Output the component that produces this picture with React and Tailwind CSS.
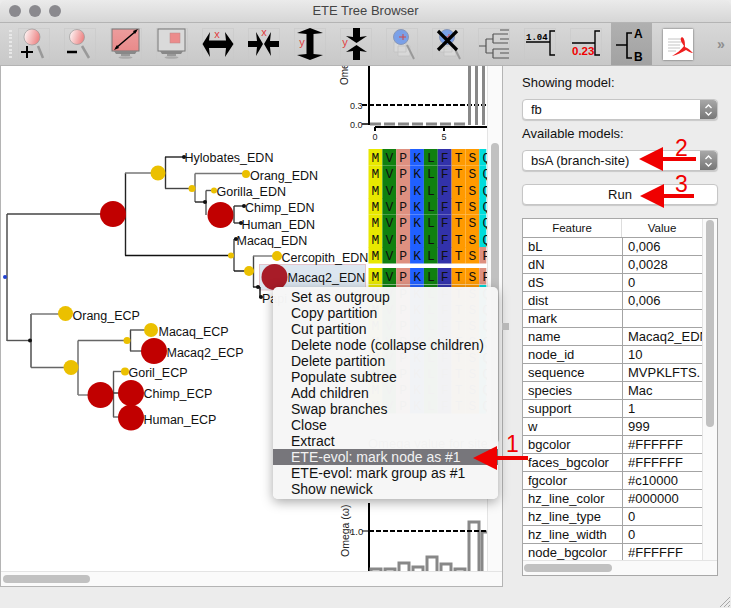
const SANS = "'Liberation Sans', Arial, sans-serif";

const lines = [
  [7, 214, 113, 214, "#444"], [7, 214, 7, 341, "#444"], [125.5, 173, 125.5, 255.5, "#222"], [125, 173, 158, 173, "#777"],
  [125, 255.5, 231, 255.5, "#111"], [165.5, 157, 165.5, 188.5, "#333"], [165, 157, 184, 157, "#222"], [165, 188.5, 192, 188.5, "#444"],
  [195, 173.5, 195, 202, "#666"], [195, 173.5, 246, 173.5, "#777"], [195, 202, 205, 202, "#222"], [206, 190.5, 206, 215, "#555"],
  [206, 190.5, 214, 190.5, "#555"], [234, 206, 234, 223, "#333"], [234, 206, 244, 206, "#333"], [234, 223, 241, 223, "#333"],
  [234, 239, 234, 271, "#444"], [234, 239, 237, 239, "#111"], [234, 271, 249, 271, "#111"], [253.5, 256, 253.5, 287, "#444"],
  [253, 256, 277, 256, "#777"], [253, 287, 260, 287, "#111"], [260, 287, 260, 298, "#111"],
  [7, 340.5, 31, 340.5, "#555"], [31, 314, 31, 367.5, "#444"], [31, 314, 65, 314, "#777"], [31, 367.5, 71, 367.5, "#666"],
  [78, 340.5, 78, 395, "#666"], [78, 340.5, 127, 340.5, "#666"], [78, 395, 100, 395, "#777"], [130.5, 330, 130.5, 351, "#444"],
  [130, 330, 151, 330, "#555"], [130, 351, 154, 351, "#555"], [113.5, 371.5, 113.5, 417, "#555"], [113, 371.5, 125, 371.5, "#666"],
  [113, 393, 131, 393, "#333"], [113, 417, 131, 417, "#666"],
];

const nodes = [
  [113, 214, 13, "#c10000"], [158, 173, 7.5, "#ebc000"], [192, 188.5, 3.5, "#ebc000"], [246, 174, 4, "#ebc000"], [214, 190.5, 3, "#ebc000"],
  [220.5, 215, 13, "#c10000"], [231, 255.5, 3, "#ebc000"], [249, 271, 5, "#ebc000"], [277, 256, 5, "#ebc000"], [274.5, 277, 13, "#a81c28"],
  [65.5, 313.5, 7.5, "#ebc000"], [71, 367.5, 7.5, "#ebc000"], [127, 340.5, 3.5, "#ebc000"], [151, 330, 7, "#ebc000"], [154, 351, 13, "#c10000"],
  [100.5, 395, 13, "#c10000"], [125, 371.5, 4, "#ebc000"], [131, 393, 13, "#c10000"], [131, 417.5, 13, "#c10000"],
  [184, 157, 2, "#111"], [205, 202, 2, "#111"], [244, 206, 2, "#111"], [241, 223, 2, "#111"], [236, 239, 2, "#111"], [258, 287, 2, "#111"],
  [261, 297, 2, "#111"], [30, 340.5, 2, "#111"], [5, 277, 2, "#2040d0"],
];

const labels = [
  ["Hylobates_EDN", 184.5, 162], ["Orang_EDN", 250, 180], ["Gorilla_EDN", 216.5, 196], ["Chimp_EDN", 245, 212], ["Human_EDN", 241.5, 229],
  ["Macaq_EDN", 236.5, 245], ["Cercopith_EDN", 281.5, 262], ["Macaq2_EDN", 287.5, 282], ["Papi", 262, 303],
  ["Orang_ECP", 72.5, 320], ["Macaq_ECP", 158.5, 336], ["Macaq2_ECP", 166.5, 357], ["Goril_ECP", 128.5, 377], ["Chimp_ECP", 143.5, 398], ["Human_ECP", 143.5, 424],
];

const aaColors = { M: "#e8e800", V: "#108010", P: "#de9080", K: "#2060ff", L: "#108010", F: "#3232aa", T: "#ff9a00", S: "#ff9a00", Q: "#00dcdc" };
const seqTops = [149, 165.5, 182, 198, 214.5, 231, 247, 268, 285, 301, 317, 333, 349, 365, 381, 397];

function Alignment() {
  return (
    <g>
      {seqTops.map((top, r) => {
        const seq = r === 6 || r === 7 ? "MVPKLFTSP" : "MVPKLFTSQ";
        return seq.split("").map((aa, c) => (
          <g key={r + "-" + c}>
            <rect x={368.5 + c * 13.85} y={top} width={c === 8 ? 7 : 13.85} height={16.5} fill={aaColors[aa]} />
            <text x={375.5 + c * 13.85} y={top + 12.5} textAnchor="middle" fontSize="13" fontFamily="'Liberation Mono', monospace" fill="#111">{aa}</text>
          </g>
        ));
      })}
    </g>
  );
}

function TopChart() {
  return (
    <g>
      <path d="M369 66V125" stroke="#000" strokeWidth="2" />
      <path d="M375 127H487M375 127V131M444 127V131" stroke="#000" strokeWidth="2" fill="none" />
      <path d="M362 105H487" stroke="#000" strokeWidth="1.8" strokeDasharray="5 2" />
      <path d="M362 124H369" stroke="#000" strokeWidth="1.5" />
      <path d="M370 124H465" stroke="#888" strokeWidth="3" strokeDasharray="11 3" />
      <path d="M469.5 66V125M476.5 66V125M483.5 66V125" stroke="#888" strokeWidth="3" />
      <g fontSize="9" fontFamily={SANS} fill="#222">
        <text x="350" y="109">0.3</text>
        <text x="350" y="128">0.0</text>
        <text x="372.5" y="140">0</text>
        <text x="441.5" y="140">5</text>
        <text transform="translate(348 85) rotate(-90)" fontSize="10">Ome</text>
      </g>
    </g>
  );
}

function BottomChart() {
  const bars = [[370, 569], [384, 569], [398, 563], [412, 567], [426, 557], [440, 564], [454, 569], [468, 522], [481, 532]];
  return (
    <g>
      <path d="M369 503V572" stroke="#000" strokeWidth="2" />
      <path d="M362 531H369" stroke="#000" strokeWidth="1" />
      {bars.map(([x, y]) => (
        <path key={x} d={`M${x + 1} 573V${y}H${x + 11}V573`} stroke="#888" strokeWidth="3" fill="none" />
      ))}
      <path d="M369 531H487" stroke="#000" strokeWidth="1.8" strokeDasharray="5 2" />
      <g fontSize="9.5" fontFamily={SANS} fill="#222">
        <text x="350" y="534.5">1.0</text>
        <text transform="translate(349 557) rotate(-90)" fontSize="10.5">Omega (ω)</text>
      </g>
    </g>
  );
}

function TreeCanvas() {
  return (
    <svg width="487" height="507" viewBox="0 66 487 507" className="-ml-px block">
      <TopChart />
      <Alignment />
      <text x="368" y="448" fontSize="13" fontFamily={SANS} fill="#333">Omega value for sites u</text>
      <BottomChart />
      <rect x="259.5" y="264.5" width="106" height="25.5" fill="#dce6f0" stroke="#e4c4cc" />
      {lines.map(([x1, y1, x2, y2, c], i) => (
        <line key={i} x1={x1} y1={y1} x2={x2} y2={y2} stroke={c} strokeWidth="1.4" />
      ))}
      {nodes.map(([cx, cy, r, fill], i) => (
        <circle key={i} cx={cx} cy={cy} r={r} fill={fill} />
      ))}
      {labels.map(([t, x, y]) => (
        <text key={t} x={x} y={y} fontSize="12.5" fontFamily={SANS} fill="#111">{t}</text>
      ))}
    </svg>
  );
}

const menuItems = [
  "Set as outgroup", "Copy partition", "Cut partition", "Delete node (collapse children)", "Delete partition", "Populate subtree",
  "Add children", "Swap branches", "Close", "Extract", "ETE-evol: mark node as #1", "ETE-evol: mark group as #1", "Show newick",
];

function ContextMenu() {
  return (
    <div className="absolute left-[272px] top-[221px] w-[225px] rounded-[5px] bg-[#f6f6f6]/[0.98] py-[2px] shadow-[0_3px_12px_rgba(0,0,0,0.35)]">
      {menuItems.map((item, i) => (
        <div
          key={item}
          className={"h-[16px] pl-[18px] text-[14px] leading-[16px] whitespace-nowrap " + (i === 10 ? "bg-[#77767b] text-[#f2f2f2]" : "text-[#111]")}
        >
          {item}
        </div>
      ))}
    </div>
  );
}

const rows = [
  ["bL", "0,006"], ["dN", "0,0028"], ["dS", "0"], ["dist", "0,006"], ["mark", ""], ["name", "Macaq2_EDN"], ["node_id", "10"],
  ["sequence", "MVPKLFTS."], ["species", "Mac"], ["support", "1"], ["w", "999"], ["bgcolor", "#FFFFFF"], ["faces_bgcolor", "#FFFFFF"],
  ["fgcolor", "#c10000"], ["hz_line_color", "#000000"], ["hz_line_type", "0"], ["hz_line_width", "0"], ["node_bgcolor", "#FFFFFF"],
];

function Stepper() {
  return (
    <div className="absolute right-0 top-0 bottom-0 flex w-[17px] items-center justify-center rounded-r-[4px] bg-gradient-to-b from-[#a8a8a8] to-[#777]">
      <svg width="9" height="14" viewBox="0 0 9 14" fill="none" stroke="#fff" strokeWidth="1.3">
        <path d="M1.5 5L4.5 2L7.5 5M1.5 9L4.5 12L7.5 9" />
      </svg>
    </div>
  );
}

function SelectBox({ value }) {
  return (
    <div className="relative h-[21px] w-[196px] rounded-[4px] border border-[#c6c6c6] bg-white pl-[8px] text-[13px] leading-[19px] text-[#111] shadow-[0_1px_1px_rgba(0,0,0,0.15)]">
      {value}
      <Stepper />
    </div>
  );
}

function SidePanel() {
  return (
    <div className="flex flex-col pl-[19px] text-[13px] text-[#111]">
      <div className="mt-[9px] h-[16px] leading-[16px]">Showing model:</div>
      <div className="mt-[8px]"><SelectBox value="fb" /></div>
      <div className="mt-[6px] h-[16px] leading-[16px]">Available models:</div>
      <div className="mt-[8px]"><SelectBox value="bsA (branch-site)" /></div>
      <div className="mt-[13px] flex h-[21px] w-[196px] items-center justify-center rounded-[4px] border border-[#c6c6c6] bg-white leading-[19px] shadow-[0_1px_1px_rgba(0,0,0,0.15)]">Run</div>
      <div className="relative mt-[13px] h-[358px] w-[196px] overflow-hidden border border-[#a8a8a8] bg-white">
        <div className="flex h-[18px] w-[179px] bg-white text-[11.5px] leading-[18px]">
          <div className="w-[99px] border-r border-[#ddd] text-center">Feature</div>
          <div className="w-[80px] text-center">Value</div>
        </div>
        {rows.map(([k, v]) => (
          <div key={k} className="flex h-[18px] w-[179px] border-t border-[#a4a4a4] text-[13px] leading-[17px]">
            <div className="w-[100px] border-r border-[#a4a4a4] pl-[5px] whitespace-nowrap">{k}</div>
            <div className="w-[79px] overflow-hidden pl-[5px] whitespace-nowrap">{v}</div>
          </div>
        ))}
        <div className="absolute left-[179px] top-0 bottom-0 w-[15px] border-l border-[#e4e4e4] bg-[#fafafa]">
          <div className="mx-auto mt-[1px] h-[207px] w-[8px] rounded-full bg-[#c1c1c1]" />
        </div>
        <div className="absolute bottom-0 left-0 right-0 h-[15px] border-t border-[#e4e4e4] bg-[#fafafa]">
          <div className="ml-[1px] mt-[3px] h-[8px] w-[88px] rounded-full bg-[#c1c1c1]" />
        </div>
      </div>
    </div>
  );
}

function Cell({ children }) {
  return (
    <div className="h-[32px] w-[32px] shrink-0 border border-[#c8c8c8]/60">
      <svg width="32" height="32" viewBox="0 0 32 32" className="-m-px block">{children}</svg>
    </div>
  );
}

function Defs() {
  return (
    <svg width="0" height="0" className="absolute">
      <defs>
        <linearGradient id="pinkGlass" x1="0" y1="0" x2="1" y2="0.3">
          <stop offset="0" stopColor="#fff" />
          <stop offset="1" stopColor="#ee8888" />
        </linearGradient>
        <linearGradient id="screen" x1="0" y1="0" x2="0" y2="1">
          <stop offset="0" stopColor="#ec9c9c" />
          <stop offset="1" stopColor="#e88a8a" />
        </linearGradient>
      </defs>
    </svg>
  );
}

function Monitor({ children, gray }) {
  return (
    <g>
      <rect x="2" y="1" width="27" height="22" fill={gray ? "#dadada" : "url(#screen)"} stroke="#777" strokeWidth="1" />
      {children}
      <path d="M4 23H27L25 26H6Z" fill="#888" />
      <rect x="11" y="26" width="9" height="2" fill="#999" />
      <ellipse cx="15.5" cy="29.5" rx="7" ry="1.3" fill="#aaa" />
    </g>
  );
}

function Glass({ cx, cy, r, fill = "url(#pinkGlass)", hx1, hx2 }) {
  return (
    <g>
      <line x1={hx1} y1="18" x2={hx2} y2="30" stroke="#999" strokeWidth="2.5" />
      <circle cx={cx} cy={cy} r={r} fill={fill} stroke="#999" strokeWidth="0.7" />
    </g>
  );
}

function RedLabel({ x, y, children }) {
  return <text x={x} y={y} textAnchor="middle" fontSize="11" fontFamily={SANS} fill="#e04040">{children}</text>;
}

function TreeZoom({ cross }) {
  return (
    <g>
      <path d="M8 14h12v10h-12zM12 18h12v10h-12z" fill="#d8d8d8" stroke="#c0c0c0" strokeWidth="0.7" />
      <line x1="21" y1="17" x2="28" y2="31" stroke="#999" strokeWidth="2" />
      <circle cx="15" cy="9" r="7.5" fill="#7aa0e8" stroke="#8898b8" />
      <path d="M13 9h7M17 6v6" stroke="#d04848" strokeWidth="1" fill="none" />
      {cross && <path d="M6 3L25 22M25 3L6 22" stroke="#000" strokeWidth="3.2" />}
    </g>
  );
}

function Toolbar() {
  return (
    <div className="flex h-[44px] items-center border-y border-[#b4b4b4] bg-gradient-to-b from-[#d8d8d8] to-[#c8c8c8] pl-[9px]">
      <div className="flex h-[30px] w-[9px] shrink-0 flex-col justify-between py-[1px]">
        {[0, 1, 2, 3, 4, 5, 6, 7].map((i) => (
          <div key={i} className="h-[2px] w-[3px] bg-[#e8e8e8]" />
        ))}
      </div>
      <div className="flex items-center gap-[14px]">
        <Cell>
          <Glass cx={14} cy={9} r={8} hx1={20} hx2={25} />
          <path d="M9 18v12M3 24h12" stroke="#000" strokeWidth="2" />
        </Cell>
        <Cell>
          <Glass cx={13} cy={9} r={7.5} hx1={18} hx2={25} />
          <path d="M3 24h10" stroke="#000" strokeWidth="2.5" />
        </Cell>
        <Cell>
          <Monitor>
            <path d="M6 20L26 3" stroke="#000" strokeWidth="1.5" />
            <path d="M4 22L9 20L7 17ZM28 1L23 3L25 6Z" fill="#000" />
          </Monitor>
        </Cell>
        <Cell>
          <Monitor gray>
            <rect x="14" y="5" width="10" height="10" fill="#ec8c8c" stroke="#b88" strokeWidth="0.5" />
          </Monitor>
        </Cell>
        <Cell>
          <path d="M0.5 16L8 4L7 12.5H24L23 4L31.5 16L23 29L24 20H7L8 29Z" fill="#000" />
          <RedLabel x={15} y={10}>x</RedLabel>
        </Cell>
        <Cell>
          <path d="M0 13H9L8 4L15 16L8 28L9 19H0ZM31 13H22L23 4L16 16L23 28L22 19H31Z" fill="#000" />
          <RedLabel x={16} y={8}>x</RedLabel>
        </Cell>
        <Cell>
          <path d="M16 0L29 5L19.5 6V26L29 27L16 32L3 27L12.5 26V6L3 5Z" fill="#000" />
          <RedLabel x={8} y={18}>y</RedLabel>
        </Cell>
        <Cell>
          <path d="M13 0H20V9L27 8L16.5 15L6 8L13 9ZM13 32H20V23L27 24L16.5 17L6 24L13 23Z" fill="#000" />
          <RedLabel x={5} y={18}>y</RedLabel>
        </Cell>
        <Cell><TreeZoom /></Cell>
        <Cell><TreeZoom cross /></Cell>
        <Cell>
          <path d="M1 18H8M8 11V25M8 11H15M8 25H15M15 6V15M15 21V30M15 6H22M15 15H22M15 21H22M15 30H22M22 2H31M22 6H30M22 11H31M22 15H30M22 21H31M22 25H31M22 30H31" stroke="#555" strokeWidth="1.2" fill="none" />
        </Cell>
        <Cell>
          <text x="2" y="12" fontSize="9" fontWeight="700" fontFamily="'Liberation Mono', monospace" fill="#000">1.04</text>
          <path d="M2 14H26M31 3H26V27H31" stroke="#000" strokeWidth="1.4" fill="none" />
        </Cell>
        <Cell>
          <text x="2" y="27" fontSize="11.5" fontWeight="700" fontFamily={SANS} fill="#f00000">0.23</text>
          <path d="M2 15H25M30 3H25V27H30" stroke="#000" strokeWidth="1.4" fill="none" />
        </Cell>
      </div>
      <div className="ml-[9px] flex h-[42px] w-[41px] shrink-0 items-center justify-center bg-gradient-to-b from-[#b0b0b0] to-[#a2a2a2]">
        <svg width="41" height="42" viewBox="0 0 41 42">
          <path d="M5 22H16M21 10H16V35H21" stroke="#000" strokeWidth="1.6" fill="none" />
          <text x="23" y="15" fontSize="12" fontWeight="700" fontFamily={SANS} fill="#000">A</text>
          <text x="23" y="38" fontSize="12" fontWeight="700" fontFamily={SANS} fill="#000">B</text>
        </svg>
      </div>
      <div className="ml-[11px] h-[31px] w-[30px] shrink-0 bg-white shadow-[0_0_2px_rgba(0,0,0,0.6)]">
        <svg width="30" height="31" viewBox="0 0 30 31">
          <path d="M5 10H21M5 13H21M5 16H17M5 19H17M5 22H13" stroke="#c4c4c4" strokeWidth="1" />
          <path d="M19 8C16 10 19 14 21 17C18 21 14 24 9 27C14 26 19 23 23 21C25 22 28 24 30 24C27 21 25 19 22 18C22 14 22 10 19 8Z" fill="#ee2020" />
        </svg>
      </div>
      <div className="ml-[24px] text-[14px] leading-none font-bold text-[#8e8e8e]">»</div>
    </div>
  );
}

function Arrows() {
  return (
    <svg width="731" height="608" className="pointer-events-none absolute left-0 top-0" fontFamily={SANS} fill="#f00000">
      <path d="M473 458L497 446V456H528V460H497V470Z" />
      <path d="M639 159L663 147V157H696V161H663V171Z" />
      <path d="M640 196L664 184V194H694V198H664V208Z" />
      <text x="506" y="452" fontSize="23">1</text>
      <text x="675" y="156" fontSize="23">2</text>
      <text x="675" y="192" fontSize="23">3</text>
    </svg>
  );
}

export default function App() {
  return (
    <div className="relative h-[608px] w-[731px] overflow-hidden bg-[#ececec]" style={{ fontFamily: SANS }}>
      <Defs />
      <div className="relative flex h-[22px] items-center justify-center rounded-t-[6px] bg-gradient-to-b from-[#ebebeb] to-[#d6d6d6] text-[13px] text-[#444]">
        <div className="absolute left-[9px] top-[5px] flex gap-[8px]">
          <div className="h-[12px] w-[12px] rounded-full bg-[#8a898e]" />
          <div className="h-[12px] w-[12px] rounded-full bg-[#8a898e]" />
          <div className="h-[12px] w-[12px] rounded-full bg-[#8a898e]" />
        </div>
        ETE Tree Browser
      </div>
      <Toolbar />
      <div className="flex">
        <div className="relative h-[521px] w-[503px] shrink-0 border-x border-b border-[#b4b4b4] bg-white">
          <TreeCanvas />
          <div className="absolute right-0 top-0 bottom-[14px] w-[15px] border-l border-[#e4e4e4] bg-[#fafafa]">
            <div className="mx-auto mt-[77px] h-[300px] w-[8px] rounded-full bg-[#c1c1c1]" />
          </div>
          <div className="absolute bottom-0 left-0 right-0 h-[15px] border-t border-[#e4e4e4] bg-[#fafafa]">
            <div className="ml-[2px] mt-[3px] h-[8px] w-[87px] rounded-full bg-[#c1c1c1]" />
          </div>
          <ContextMenu />
          <div className="absolute -right-[7px] top-[257px] h-[7px] w-[7px] bg-[#b8b8b8]" />
        </div>
        <SidePanel />
      </div>
      <svg width="14" height="14" className="absolute bottom-0 right-0" stroke="#a8a8a8" strokeWidth="1">
        <path d="M3 13L13 3M7 13L13 7M11 13L13 11" />
      </svg>
      <Arrows />
    </div>
  );
}
